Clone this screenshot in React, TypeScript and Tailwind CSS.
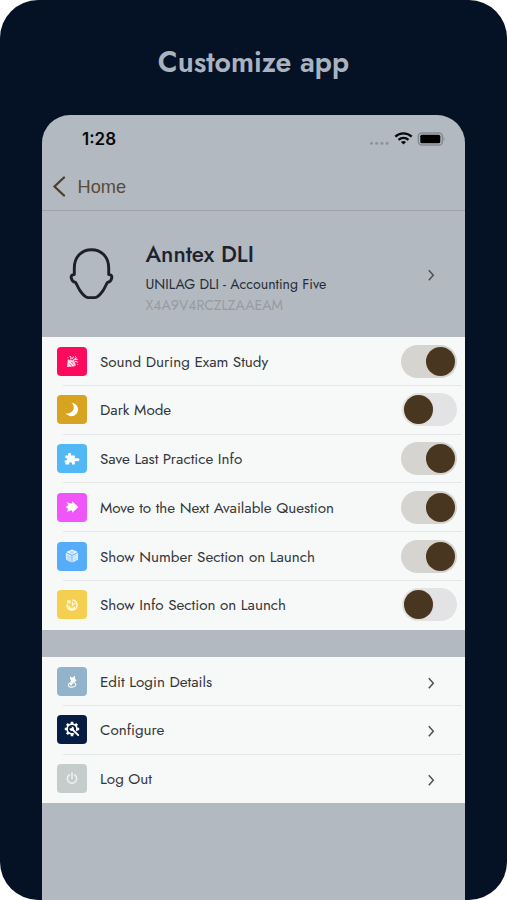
import { useState } from "react"
import type { ReactNode } from "react"

type Row = {
  label: string
  tile: string
  icon: ReactNode
}

type ToggleRow = Row & { on: boolean }

const PopperIcon = () => (
  <svg width="13" height="13" viewBox="0 0 13 13" fill="none" stroke="#ffd3e1" strokeWidth="1.1">
    <path d="M2 4 9 11.300 1 12z" fill="#ffe3ec" stroke="none" />
    <path d="M3.500 5.500c3 .5 5 2.200 5.300 5" strokeWidth="2.200" />
    <path d="M3.600 1.200c1.800.4 1.800 2 1 3.200M6.500 6.300l4-4M6.300 4 7.600 1.500M8.300 7c1.300-.8 2.700-.5 3.500.5M8.500 4.600l3.300-.2M9 1.500h.9M11.300 9.500h.9M1.500 2.800h.9" />
    <path d="M3.200 8 5.900 10.700" stroke="#fb0a5d" strokeWidth=".6" />
  </svg>
)

const MoonIcon = () => (
  <svg width="14" height="15" viewBox="0 0 14 15" fill="#fff">
    <path d="M6.200 .8C10 1 13 3.800 13 7.500c0 3.800-3 6.700-6.600 6.700-2.400 0-4.500-1.200-5.700-3.100 1 .4 2.200.5 3.300.2C7.200 10.400 9 7.800 8.700 4.800 8.500 3.200 7.600 1.700 6.200.8z" />
  </svg>
)

const PuzzleIcon = () => (
  <svg width="16" height="14" viewBox="0 0 16 14" fill="#fff">
    <path d="M1.300 3.400h2.900C3.700 1.700 4.400.7 5.600.7S7.500 1.700 7 3.400h3.800v3c1-.5 1.700-.1 2.100.1 1.200-.6 2.600 0 2.600 1.200s-1.400 1.800-2.600 1.200c-.6.3-1.300.5-2.100 0v3.600H8c.3-1.500-.3-2.200-1.400-2.200s-1.700.7-1.400 2.200H1.300V9.700C.2 9.500.2 8.900.8 8.500c1.700.2 2.200-.4 2.200-1.300S2.300 5.900 1.300 6z" />
  </svg>
)

const ArrowIcon = () => (
  <svg width="14" height="14" viewBox="0 0 14 14" fill="#fff">
    <path d="M7.200 1.200 13.400 7 7.200 12.800V10.300L1.700 11.700 3.200 9 .8 7l2.400-2L1.700 2.300 7.200 3.700z" />
  </svg>
)

const CubeIcon = () => (
  <svg width="14" height="14" viewBox="0 0 14 14">
    <path d="M7 .6 12.800 3 7 5.700 1.200 3z" fill="#f2f8fe" />
    <path d="M.8 3.700 6.600 6.400v7L1 10.700zM13.200 3.700 7.400 6.400v7l5.600-2.700z" fill="#d9ecfe" />
    <path d="M3 6.200v5M5 7v5M9.300 7.500l2-1M9.300 10.500l2-1M5 2.500l4 1.600M9 2.200 5 4.100" stroke="#8cc5f8" strokeWidth=".7" />
  </svg>
)

const PieIcon = () => (
  <svg width="12" height="12" viewBox="0 0 12 12" fill="none" stroke="#fff8df">
    <path d="M6.500 .9a5.100 5.100 0 1 1-5.600 4.600" strokeWidth="1.500" />
    <path d="M1 1.200h3.700v3.300H1z" fill="#fff3c9" stroke="none" />
    <path d="M2.700 6.300c.3 3.500 5 4.200 6.300 1.100M6.500 2.700v3.500L9.300 4.300" strokeWidth="1.300" />
  </svg>
)

const PenIcon = () => (
  <svg width="11" height="13" viewBox="0 0 11 13" fill="#fff" stroke="#fff">
    <path d="M3 1.200 5 2.800 8.200.8 7.900 3.300 9.600 5.800 7.200 7 4.300 6 3 3.600z" stroke="none" />
    <path d="M5 5.500 3 8.200C1 8.700.7 10.800 2.500 11.700c2 .9 5.500.5 6.200-1.300.5-1.400-.6-2.300-1.700-2.600L7.800 5" fill="none" strokeWidth="1.100" />
    <path d="M6.500 6 3.500 10.200" strokeWidth="1.800" />
  </svg>
)

const GearIcon = () => (
  <svg width="17" height="17" viewBox="0 0 17 17" fill="none" stroke="#fff">
    <circle cx="8" cy="8" r="4.900" strokeWidth="1.700" />
    <path
      d="M8 .8v2.200M8 13v2.200M.8 8H3M13 8h2.200M2.900 2.900l1.600 1.600M11.500 4.500l1.600-1.600M2.900 13.100l1.600-1.600"
      strokeWidth="2.600"
    />
    <path d="M8.500 8.500l4 4" stroke="#071c42" strokeWidth="3.600" />
    <path d="M8 8l6.200 6.200" strokeWidth="1.900" strokeLinecap="round" />
    <path d="M5.600 7.300a2.200 2.200 0 1 0 2-1.800L8 7.400z" fill="#fff" stroke="none" />
  </svg>
)

const PowerIcon = () => (
  <svg width="12" height="13" viewBox="0 0 12 13" fill="none" stroke="#f0f2f2" strokeWidth="1.500" strokeLinecap="round">
    <path d="M6 1v5.500M3.200 2.900a4.700 4.700 0 1 0 5.600 0" />
  </svg>
)

const HeadIcon = () => (
  <svg width="46" height="54" viewBox="0 0 46 54" fill="none" stroke="#1b202a" strokeWidth="2.900" strokeLinejoin="round">
    <path d="M5.300 27.500V21C5.300 9.500 13 2.700 22.500 2.700S39.700 9.500 39.700 21v6.500c2.600.1 3.400 1.400 3.100 3.200-.5 3-1.700 4.300-4.300 4.700-1.800 2.600-2.500 5.400-4.500 8.200-2.100 3-4.600 6.900-8 7h-7c-3.400-.1-5.900-4-8-7-2-2.800-2.700-5.600-4.500-8.200-2.600-.4-3.800-1.700-4.300-4.700C1.900 28.900 2.700 27.600 5.300 27.500z" />
  </svg>
)

const Chevron = () => (
  <svg width="8" height="14" viewBox="0 0 8 14" fill="none" stroke="#55504a" strokeWidth="1.500">
    <path d="M1.800 2.200 6.300 7.200 1.800 12.200" />
  </svg>
)

const settings: ToggleRow[] = [
  { label: "Sound During Exam Study", tile: "bg-[#fb0a5d]", icon: <PopperIcon />, on: true },
  { label: "Dark Mode", tile: "bg-[#d8a321]", icon: <MoonIcon />, on: false },
  { label: "Save Last Practice Info", tile: "bg-[#51b7f5]", icon: <PuzzleIcon />, on: true },
  { label: "Move to the Next Available Question", tile: "bg-[#ef55f9]", icon: <ArrowIcon />, on: true },
  { label: "Show Number Section on Launch", tile: "bg-[#55acf9]", icon: <CubeIcon />, on: true },
  { label: "Show Info Section on Launch", tile: "bg-[#f5cf50]", icon: <PieIcon />, on: false },
]

const account: Row[] = [
  { label: "Edit Login Details", tile: "bg-[#92b3ca]", icon: <PenIcon /> },
  { label: "Configure", tile: "bg-[#071c42]", icon: <GearIcon /> },
  { label: "Log Out", tile: "bg-[#c5cccc]", icon: <PowerIcon /> },
]

function RowShell({ row, last, children }: { row: Row; last: boolean; children: ReactNode }) {
  return (
    <div className="h-[48.75px] flex flex-col">
      <div className="flex-1 min-h-0 pt-[0.5px] flex items-center pl-[15px] pr-[8px]">
        <span className={`w-[30px] h-[29px] rounded-[4px] shrink-0 flex items-center justify-center ${row.tile}`}>
          {row.icon}
        </span>
        <span className="ml-[13px] mt-[1px] flex-1 text-[15.200px] leading-5 whitespace-nowrap text-[#34373a]">
          {row.label}
        </span>
        {children}
      </div>
      <div className={`h-px ml-[21px] mr-[3px] ${last ? "" : "bg-[#e6e7e9]"}`} />
    </div>
  )
}

function Toggle({ on, label, onChange }: { on: boolean; label: string; onChange: () => void }) {
  return (
    <button
      type="button"
      role="switch"
      aria-checked={on}
      aria-label={label}
      onClick={onChange}
      className={`h-[33px] rounded-full shrink-0 flex items-center px-[2px] ${
        on ? "w-[56px] bg-[#d5d4d1] justify-end" : "w-[55px] bg-[#e3e3e6] justify-start"
      }`}
    >
      <span className="size-[29px] rounded-full bg-[#483621] shadow-[0_0_2px_#d8ccb4]" />
    </button>
  )
}

export default function App() {
  const [toggles, setToggles] = useState(settings.map((s) => s.on))

  const flip = (i: number) => {
    setToggles(toggles.map((t, n) => (n === i ? !t : t)))
  }

  return (
    <div className="bg-white w-[507px] h-[900px] font-['Jost','Lato',sans-serif]">
      <div className="h-full bg-[#051124] rounded-[38px] overflow-hidden flex flex-col items-center">
        <h1 className="h-[115px] pt-[45px] text-[28.500px] leading-[36px] font-semibold text-[#a9b3bf] whitespace-nowrap">
          Customize app
        </h1>

        <div className="w-[423px] flex-1 bg-[#b2b9c1] rounded-t-[28px] overflow-hidden">
          <div className="h-[47px] pl-[40px] pr-[20px] pt-[2px] flex items-center font-['Inter',sans-serif]">
            <span className="text-[17px] font-semibold text-[#07090c]">1:28</span>
            <svg className="ml-auto" width="76" height="16" viewBox="0 0 76 16">
              <g fill="#8e949d">
                <circle cx="2.500" cy="11.300" r="1.500" />
                <circle cx="7.700" cy="11.300" r="1.500" />
                <circle cx="12.900" cy="11.300" r="1.500" />
                <circle cx="18.100" cy="11.300" r="1.500" />
              </g>
              <g fill="none" stroke="#090b0e" strokeWidth="2.200">
                <path d="M26.300 4.600a11.800 11.800 0 0 1 16.400 0M29.500 7.900a7.200 7.200 0 0 1 10 0" />
              </g>
              <path d="M34.500 12.600 31.900 10.100a3.800 3.800 0 0 1 5.200 0z" fill="#090b0e" />
              <rect x="49.400" y=".9" width="24" height="12" rx="3.500" fill="none" stroke="#858a92" strokeWidth="1.500" />
              <rect x="51.300" y="2.700" width="20" height="8.600" rx="1.600" fill="#000" />
              <path d="M74.600 4.900c1.300.5 1.300 3.500 0 4z" fill="#858a92" />
            </svg>
          </div>

          <div className="h-[49px] pt-px border-b border-[#9da1a9] pl-[10px] flex items-center text-[#5a4c37] font-['Liberation_Sans',sans-serif]">
            <svg width="14" height="22" viewBox="0 0 14 22" fill="none" stroke="#4f3f28" strokeWidth="2.300" strokeLinecap="round">
              <path d="M12 1.500 2.500 10.500l9.500 9" />
            </svg>
            <span className="ml-[11.500px] mt-[2px] text-[18.200px]">Home</span>
          </div>

          <div className="h-[126px] flex items-center pl-[26.500px] pr-[30px]">
            <HeadIcon />
            <div className="ml-[31px] pt-[5px] flex-1 whitespace-nowrap">
              <p className="text-[22.600px] leading-[30px] font-medium text-[#1d232e]">Anntex DLI</p>
              <p className="mt-[4px] text-[14.100px] leading-[22px] text-[#272d37]">UNILAG DLI - Accounting Five</p>
              <p className="text-[14.100px] leading-[20px] text-[#979ba1]">X4A9V4RCZLZAAEAM</p>
            </div>
            <span className="pt-[2px]">
              <Chevron />
            </span>
          </div>

          <div className="bg-[#f7f8f8] h-[292.500px]">
            {settings.map((row, i) => (
              <RowShell key={row.label} row={row} last={i === settings.length - 1}>
                <Toggle on={toggles[i]} label={row.label} onChange={() => flip(i)} />
              </RowShell>
            ))}
          </div>

          <div className="mt-[27.500px] bg-[#f7f8f8] h-[146px]">
            {account.map((row, i) => (
              <RowShell key={row.label} row={row} last={i === account.length - 1}>
                <span className="mr-[22px] mt-[3px]">
                  <Chevron />
                </span>
              </RowShell>
            ))}
          </div>
        </div>
      </div>
    </div>
  )
}
